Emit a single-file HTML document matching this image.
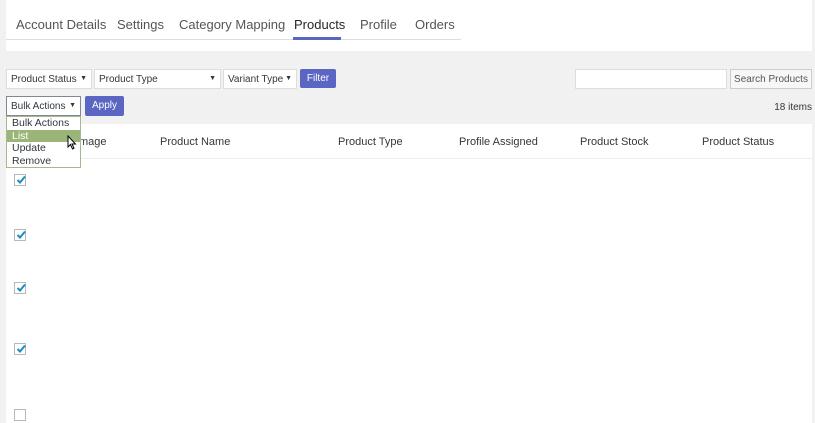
<!DOCTYPE html>
<html><head><style>
*{box-sizing:border-box;margin:0;padding:0}
body{width:815px;height:423px;overflow:hidden;background:#f1f1f1;font-family:"Liberation Sans",sans-serif;color:#32373c;position:relative}
.a{position:absolute;white-space:nowrap}
.top{left:6px;top:0;width:806px;height:51px;background:#fff}
.tab{top:17px;font-size:13px;color:#555}
.sel{background:#fff;border:1px solid #ddd;height:20px;font-size:10px;padding:4px 4px;color:#32373c}
.sel i{position:absolute;right:4px;top:5px;font-style:normal;font-size:7px}
.btn{background:#5b65c2;color:#fff;font-size:10px;border-radius:2px;text-align:center;padding-top:4px}
.th{top:136px;font-size:11px;color:#32373c}
.cb{width:12px;height:12px;border:1px solid #b4b9be;background:#fff;left:14px}
.cb svg{position:absolute;left:1px;top:0}
</style></head><body>
<div class="a top"></div>
<div class="a" style="left:6px;top:39px;width:455px;height:1px;background:#dcdde6"></div>
<div class="a tab" style="left:16px">Account Details</div>
<div class="a tab" style="left:117px">Settings</div>
<div class="a tab" style="left:179px">Category Mapping</div>
<div class="a tab" style="left:294px;color:#23282d">Products</div>
<div class="a" style="left:293px;top:37px;width:48px;height:3px;background:#5b65c2"></div>
<div class="a tab" style="left:360px">Profile</div>
<div class="a tab" style="left:415px">Orders</div>

<div class="a sel" style="left:6px;top:69px;width:86px">Product Status<i>▼</i></div>
<div class="a sel" style="left:94px;top:69px;width:127px">Product Type<i>▼</i></div>
<div class="a sel" style="left:223px;top:69px;width:74px">Variant Type<i>▼</i></div>
<div class="a btn" style="left:300px;top:69px;width:36px;height:19px">Filter</div>
<div class="a" style="left:575px;top:69px;width:152px;height:20px;background:#fff;border:1px solid #ddd"></div>
<div class="a" style="left:730px;top:69px;width:82px;height:20px;background:#f7f7f7;border:1px solid #ccc;font-size:10px;color:#555;text-align:center;padding-top:4px">Search Products</div>

<div class="a" style="left:6px;top:124px;width:806px;height:299px;background:#fff"></div>
<div class="a" style="left:6px;top:158px;width:806px;height:1px;background:#eee"></div>
<div class="a sel" style="left:6px;top:96px;width:75px;border-color:#7e8993">Bulk Actions<i>▼</i></div>
<div class="a btn" style="left:85px;top:96px;width:39px;height:20px">Apply</div>
<div class="a" style="right:3px;top:102px;font-size:10px">18 items</div>

<div class="a th" style="left:79px">mage</div>
<div class="a th" style="left:160px">Product Name</div>
<div class="a th" style="left:338px">Product Type</div>
<div class="a th" style="left:459px">Profile Assigned</div>
<div class="a th" style="left:580px">Product Stock</div>
<div class="a th" style="left:702px">Product Status</div>

<div class="a" style="left:6px;top:116px;width:75px;height:52px;background:#fff;border:1px solid #a5b98f;font-size:10.5px;line-height:12.5px">
<div style="padding-left:5px">Bulk Actions</div>
<div style="padding-left:5px;background:#9bb578;color:#fff">List</div>
<div style="padding-left:5px">Update</div>
<div style="padding-left:5px">Remove</div>
</div>
<svg class="a" style="left:67px;top:135px" width="10" height="15" viewBox="0 0 10 15"><path d="M1 1L1 12L3.5 9.5L5.5 14L7 13.3L5 9L8.5 9Z" fill="#fff" stroke="#000" stroke-width="1"/></svg>

<div class="a cb" style="top:174px"><svg width="10" height="10"><path d="M1.5 5L4 7.5L9 1.5" fill="none" stroke="#1e8cbe" stroke-width="2"/></svg></div>
<div class="a cb" style="top:229px"><svg width="10" height="10"><path d="M1.5 5L4 7.5L9 1.5" fill="none" stroke="#1e8cbe" stroke-width="2"/></svg></div>
<div class="a cb" style="top:282px"><svg width="10" height="10"><path d="M1.5 5L4 7.5L9 1.5" fill="none" stroke="#1e8cbe" stroke-width="2"/></svg></div>
<div class="a cb" style="top:343px"><svg width="10" height="10"><path d="M1.5 5L4 7.5L9 1.5" fill="none" stroke="#1e8cbe" stroke-width="2"/></svg></div>
<div class="a cb" style="top:409px"></div>
</body></html>
